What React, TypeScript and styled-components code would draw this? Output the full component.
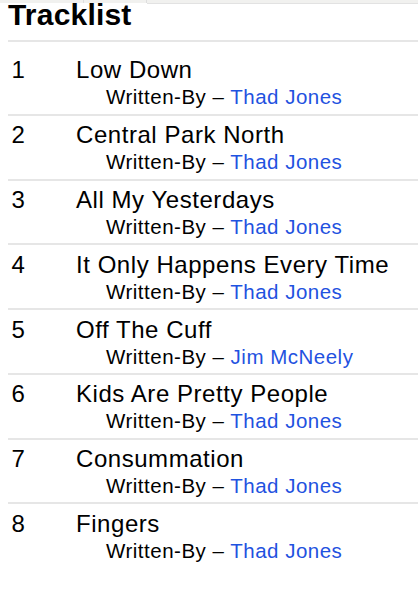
import React from "react";
import styled, { createGlobalStyle } from "styled-components";

const GlobalStyle = createGlobalStyle`
  html, body {
    margin: 0;
    padding: 0;
    background: #fff;
  }
  body {
    font-family: "Liberation Sans", Arial, Helvetica, sans-serif;
    color: #000;
    overflow: hidden;
  }
`;

interface Track {
  position: string;
  title: string;
  writer: string;
}

const tracks: Track[] = [
  { position: "1", title: "Low Down", writer: "Thad Jones" },
  { position: "2", title: "Central Park North", writer: "Thad Jones" },
  { position: "3", title: "All My Yesterdays", writer: "Thad Jones" },
  { position: "4", title: "It Only Happens Every Time", writer: "Thad Jones" },
  { position: "5", title: "Off The Cuff", writer: "Jim McNeely" },
  { position: "6", title: "Kids Are Pretty People", writer: "Thad Jones" },
  { position: "7", title: "Consummation", writer: "Thad Jones" },
  { position: "8", title: "Fingers", writer: "Thad Jones" },
];

const App = () => {
  return (
    <>
      <GlobalStyle />
      <TabStrip>
        <Tab />
        <Tab />
        <TabRest />
      </TabStrip>
      <Section>
        <Heading>Tracklist</Heading>
        <List>
          {tracks.map((track) => (
            <Row key={track.position}>
              <Position>{track.position}</Position>
              <div>
                <Title>{track.title}</Title>
                <Credit>
                  Written-By – <CreditLink href="#">{track.writer}</CreditLink>
                </Credit>
              </div>
            </Row>
          ))}
        </List>
      </Section>
    </>
  );
};

export default App;

const TabStrip = styled.div`
  display: flex;
  height: 4px;
`;
const Tab = styled.div`
  width: 83px;
  height: 3px;
  background: #f1f1ef;
  border-right: 1px solid #dedede;
  &:nth-child(2) {
    width: 62px;
  }
`;
const TabRest = styled.div`
  flex: 1;
  height: 3px;
  background: #f1f1ef;
  border-bottom: 1px solid #e2e2e2;
`;
const Section = styled.section`
  margin-left: 8px;
`;
const Heading = styled.h2`
  margin: -3px 0 0;
  font-size: 30px;
  font-weight: bold;
  letter-spacing: 0.2px;
  line-height: 28px;
  padding-bottom: 11px;
  border-bottom: 2px solid #e6e6e6;
`;
const List = styled.ol`
  list-style: none;
  margin: 0;
  padding: 9px 0 0;
`;
const Row = styled.li`
  display: grid;
  grid-template-columns: 64.5px 1fr;
  padding: 5.4px 0 3.4px 3.5px;
  &:not(:last-child) {
    border-bottom: 2px solid #e6e6e6;
  }
`;
const Position = styled.span`
  font-size: 24px;
  line-height: 28px;
`;
const Title = styled.div`
  font-size: 24px;
  letter-spacing: 0.55px;
  line-height: 28px;
  white-space: nowrap;
`;
const Credit = styled.div`
  font-size: 20.5px;
  letter-spacing: 0.5px;
  line-height: 26px;
  padding-left: 30px;
  white-space: nowrap;
`;
const CreditLink = styled.a`
  color: #1f52e0;
  text-decoration: none;
`;
